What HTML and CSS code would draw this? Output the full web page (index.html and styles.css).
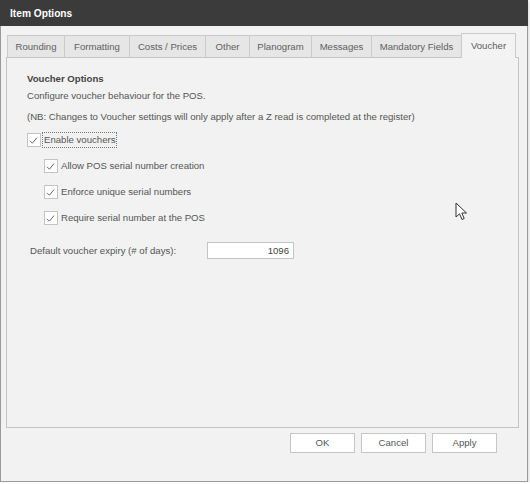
FILE: index.html
```html
<!DOCTYPE html>
<html>
<head>
<meta charset="utf-8">
<link rel="stylesheet" href="styles.css">
</head>
<body>
<div class="window">
  <div class="titlebar">Item Options</div>
  <div class="body">
    <div class="tabs">
      <div class="tab t1">Rounding</div>
      <div class="tab t2">Formatting</div>
      <div class="tab t3">Costs / Prices</div>
      <div class="tab t4">Other</div>
      <div class="tab t5">Planogram</div>
      <div class="tab t6">Messages</div>
      <div class="tab t7">Mandatory Fields</div>
      <div class="tab t8 active">Voucher</div>
    </div>
    <div class="panel">
      <div class="heading">Voucher Options</div>
      <div class="line">Configure voucher behaviour for the POS.</div>
      <div class="line nb">(NB: Changes to Voucher settings will only apply after a Z read is completed at the register)</div>
      <div class="check main">
        <span class="box"><svg viewBox="0 0 13 13" width="13" height="13"><path d="M3 6.8 L5.4 9.2 L10 3.6" fill="none" stroke="#666" stroke-width="1"/></svg></span>
        <span class="label focus">Enable vouchers</span>
      </div>
      <div class="subs">
        <div class="check">
          <span class="box"><svg viewBox="0 0 13 13" width="13" height="13"><path d="M3 6.8 L5.4 9.2 L10 3.6" fill="none" stroke="#666" stroke-width="1"/></svg></span>
          <span class="label">Allow POS serial number creation</span>
        </div>
        <div class="check">
          <span class="box"><svg viewBox="0 0 13 13" width="13" height="13"><path d="M3 6.8 L5.4 9.2 L10 3.6" fill="none" stroke="#666" stroke-width="1"/></svg></span>
          <span class="label">Enforce unique serial numbers</span>
        </div>
        <div class="check">
          <span class="box"><svg viewBox="0 0 13 13" width="13" height="13"><path d="M3 6.8 L5.4 9.2 L10 3.6" fill="none" stroke="#666" stroke-width="1"/></svg></span>
          <span class="label">Require serial number at the POS</span>
        </div>
      </div>
      <div class="field">
        <span class="field-label">Default voucher expiry (# of days):</span>
        <span class="input">1096</span>
      </div>
    </div>
    <div class="buttons">
      <div class="btn">OK</div>
      <div class="btn">Cancel</div>
      <div class="btn">Apply</div>
    </div>
  </div>
  <svg class="cursor" width="14" height="20" viewBox="0 0 14 20"><path d="M1 1 L1 15 L4.5 11.8 L7 17.5 L9.2 16.5 L6.8 11 L11.5 11 Z" fill="#fff" stroke="#333" stroke-width="1"/></svg>
</div>
</body>
</html>
```
FILE: styles.css
```css
html, body {
  margin: 0;
  padding: 0;
  background: #ffffff;
}
body {
  font-family: "Liberation Sans", Arial, sans-serif;
  font-size: 9.6px;
  color: #555555;
}
.window {
  position: relative;
  width: 528px;
  height: 482px;
  box-sizing: border-box;
  border: 1px solid #9a9a9a;
  border-top: none;
  background: #f2f2f2;
  display: flex;
  flex-direction: column;
  box-shadow: 1px 1px 2px rgba(0,0,0,0.15);
}
.titlebar {
  height: 26px;
  line-height: 27px;
  background: #3b3b3b;
  color: #ffffff;
  font-weight: bold;
  font-size: 10.2px;
  padding-left: 10px;
  margin: 0 -1px;
}
.body {
  padding: 7px 0 0 5px;
  display: flex;
  flex-direction: column;
}
.tabs {
  display: flex;
  align-items: flex-end;
  height: 24px;
  padding-left: 1px;
  position: relative;
  z-index: 1;
}
.tab {
  height: 22px;
  line-height: 21px;
  box-sizing: border-box;
  text-align: center;
  background: #e6e6e6;
  border: 1px solid #cbcbcb;
  border-bottom: none;
  margin-right: -1px;
  color: #606060;
}
.tab.active {
  height: 25px;
  line-height: 24px;
  background: #f3f3f3;
  margin-bottom: -1px;
  margin-right: 0;
}
.t1 { width: 58px; }
.t2 { width: 66px; }
.t3 { width: 77px; }
.t4 { width: 45px; }
.t5 { width: 63px; }
.t6 { width: 61px; }
.t7 { width: 91px; }
.t8 { width: 55px; }
.panel {
  width: 513px;
  height: 371px;
  box-sizing: border-box;
  border: 1px solid #c4c4c4;
  background: #f2f2f2;
  padding: 13px 0 0 20px;
}
.heading {
  font-weight: bold;
  color: #444444;
  line-height: 16px;
}
.line {
  margin-top: 1px;
  line-height: 16px;
}
.nb {
  margin-top: 5px;
}
.check {
  display: flex;
  align-items: center;
  height: 16px;
}
.check.main {
  margin-top: 7px;
}
.box {
  width: 14px;
  height: 14px;
  box-sizing: border-box;
  border: 1px solid #c4c4c4;
  background: #ffffff;
  display: flex;
  margin-right: 2px;
}
.box svg {
  margin: 0 -1px;
}
.label {
  padding: 0 1px;
  line-height: 14px;
}
.label.focus {
  outline: 1px dotted #777;
}
.subs {
  padding-left: 17px;
  margin-top: 10px;
  display: flex;
  flex-direction: column;
  gap: 10px;
}
.field {
  display: flex;
  align-items: center;
  margin-top: 16px;
  padding-left: 3px;
}
.field-label {
  width: 177px;
}
.input {
  width: 87px;
  height: 17px;
  box-sizing: border-box;
  border: 1px solid #c4c4c4;
  background: #ffffff;
  text-align: right;
  padding-right: 4px;
  line-height: 15px;
  color: #444;
}
.buttons {
  display: flex;
  justify-content: flex-end;
  gap: 6px;
  padding-right: 30px;
  margin-top: 5px;
}
.btn {
  width: 65px;
  height: 20px;
  box-sizing: border-box;
  border: 1px solid #c6c6c6;
  background: #ffffff;
  text-align: center;
  line-height: 18px;
  color: #555;
}
.cursor {
  position: absolute;
  left: 454px;
  top: 202px;
}
```
